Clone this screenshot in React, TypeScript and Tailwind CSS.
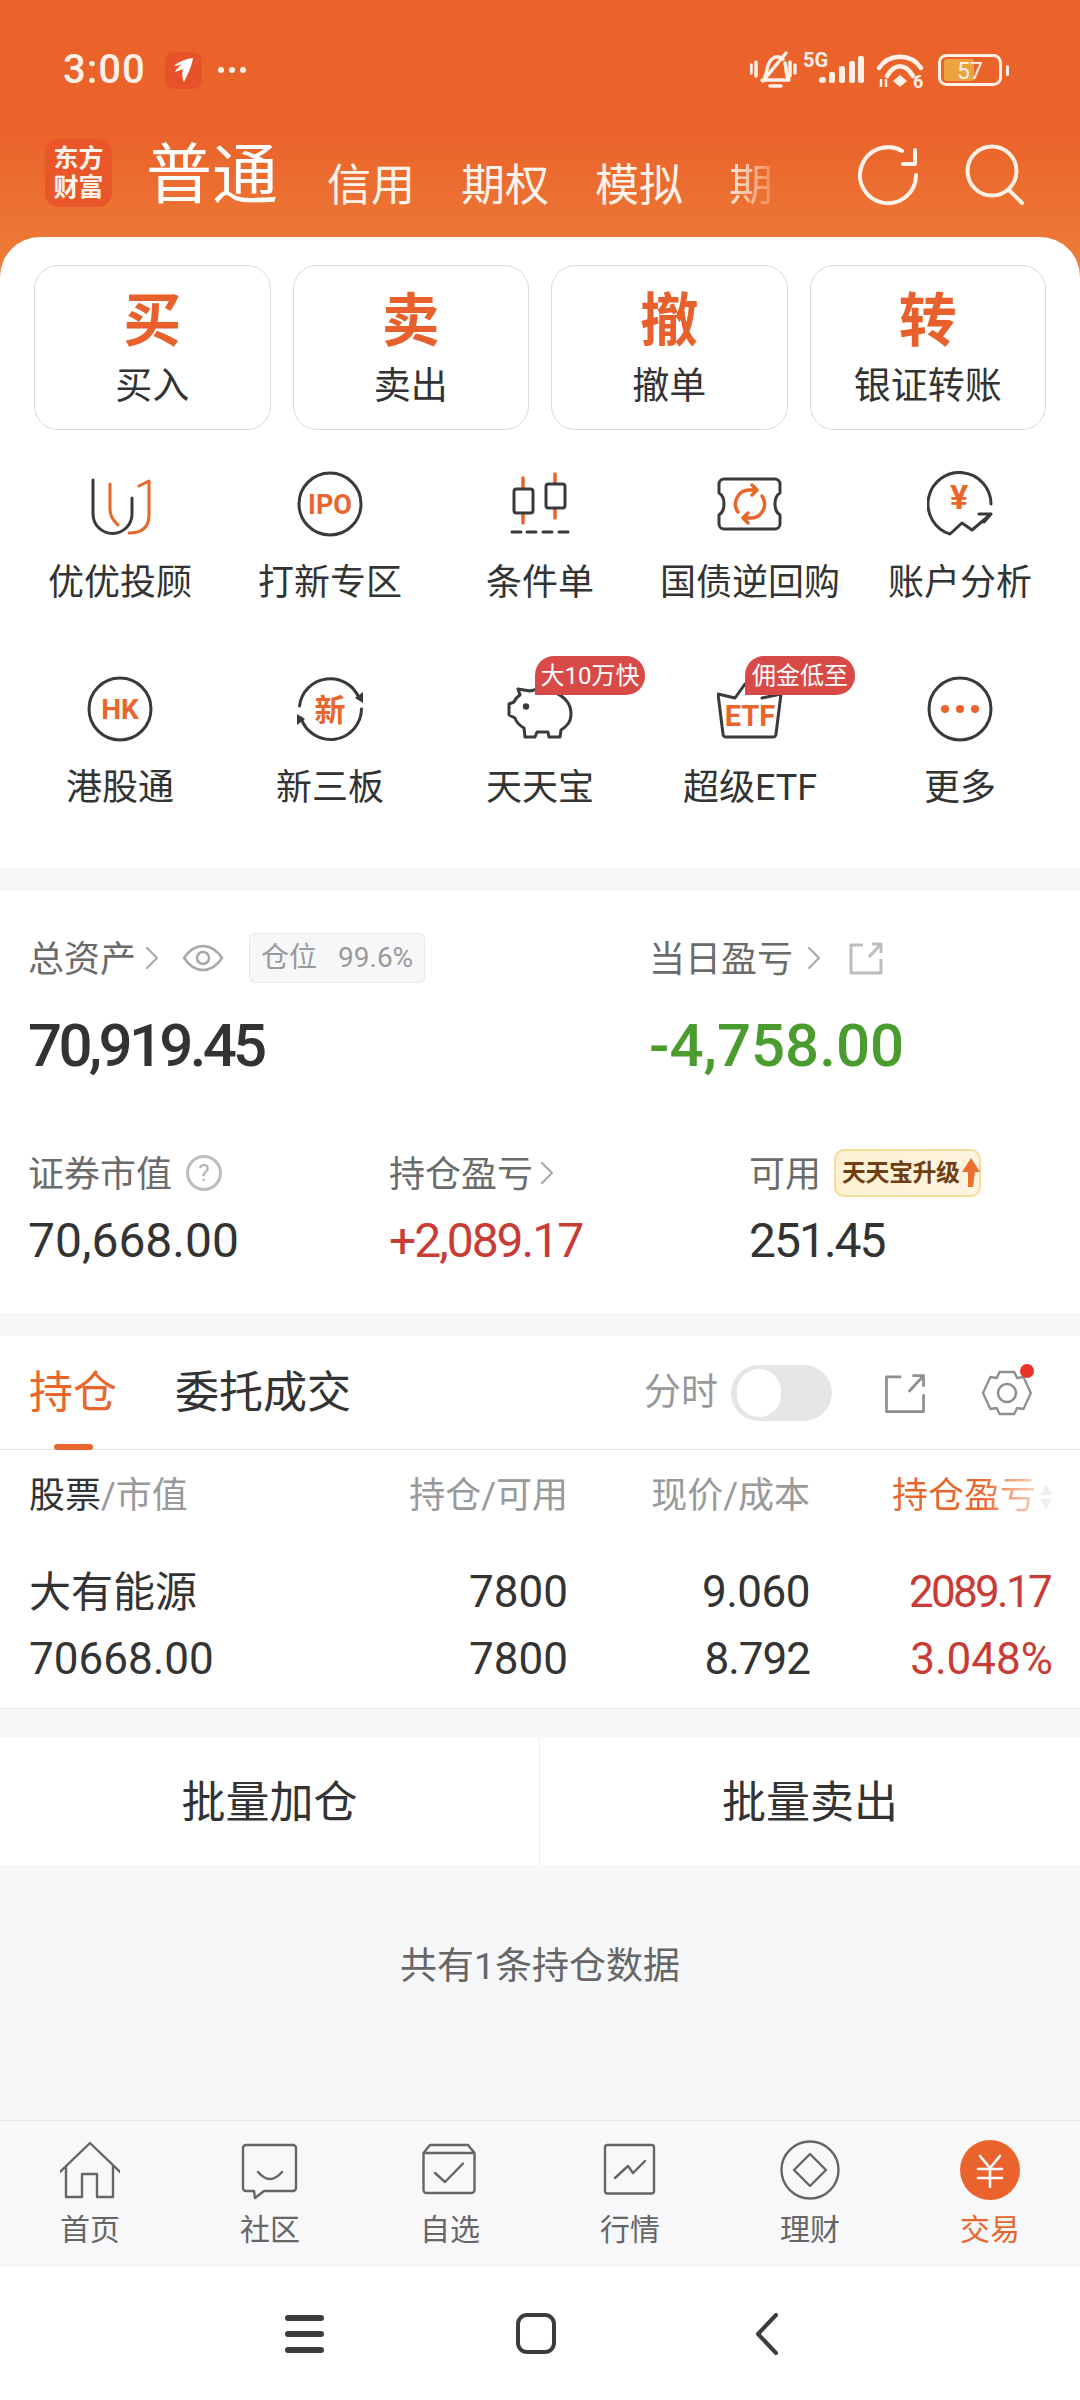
import React from "react";

const DK = "#3a3a3a";
const OR = "#e8652c";

function Svg({ children, w = 66, h = 66 }: { children: React.ReactNode; w?: number; h?: number }) {
  return (
    <svg width={w} height={h} viewBox={`0 0 ${w} ${h}`} fill="none" strokeLinecap="round" strokeLinejoin="round" className="block shrink-0">
      {children}
    </svg>
  );
}

function IconText({ x, y, size, children }: { x: number; y: number; size: number; children: string }) {
  return (
    <text x={x} y={y} fontSize={size} fontWeight={700} fill={OR} stroke="none" textAnchor="middle" fontFamily="Roboto, 'Noto Sans CJK SC', sans-serif">
      {children}
    </text>
  );
}

const icons: Record<string, React.ReactNode> = {
  uu: (
    <Svg>
      <path d="M6 9V43a19.5 19.5 0 0 0 39 0V27" stroke={DK} strokeWidth={3} />
      <path d="M23 13V38Q23 47 31 54M42 62Q62 62 62 44V10L52 15" stroke={OR} strokeWidth={3} />
    </Svg>
  ),
  ipo: (
    <Svg>
      <circle cx="33" cy="33" r="31" stroke={DK} strokeWidth={3} />
      <IconText x={33} y={43} size={27}>IPO</IconText>
    </Svg>
  ),
  candle: (
    <Svg>
      <path d="M16 7V52M48 3V47" stroke={OR} strokeWidth={3.5} />
      <rect x="7" y="18" width="19" height="24" rx="2.5" fill="#fff" stroke={DK} strokeWidth={3} />
      <rect x="39" y="13" width="19" height="24" rx="2.5" fill="#fff" stroke={DK} strokeWidth={3} />
      <path d="M5 61H14M20 61H29M36 61H45M52 61H61" stroke={DK} strokeWidth={3} />
    </Svg>
  ),
  ticket: (
    <Svg>
      <path d="M7 8H58a5 5 0 0 1 5 5V22q-5 3 -5 11t5 11V53a5 5 0 0 1 -5 5H7a5 5 0 0 1 -5 -5V44q5 -3 5 -11T2 22V13a5 5 0 0 1 5 -5Z" stroke={DK} strokeWidth={3} />
      <path d="M21 41A14 14 0 0 1 33 19H38M35 14L40 19L35 24" stroke={OR} strokeWidth={3.5} />
      <path d="M45 25A14 14 0 0 1 33 47H28M31 52L26 47L31 42" stroke={OR} strokeWidth={3.5} />
    </Svg>
  ),
  yen: (
    <Svg>
      <path d="M64 33A31.5 31.5 0 1 0 23 63L35 52L45 59L64 43M52 43H64L57 51" stroke={DK} strokeWidth={3} />
      <IconText x={32} y={38} size={34}>¥</IconText>
    </Svg>
  ),
  hk: (
    <Svg>
      <circle cx="33" cy="33" r="31" stroke={DK} strokeWidth={3} />
      <IconText x={33} y={43} size={28}>HK</IconText>
    </Svg>
  ),
  xin: (
    <Svg>
      <path d="M2.5 30A31 31 0 0 1 62 22M64.5 33A31 31 0 0 1 4 42" stroke={DK} strokeWidth={3} />
      <path d="M58 22L66 16V27ZM8 43L0 49V38Z" fill={DK} />
      <IconText x={33} y={45} size={31}>新</IconText>
    </Svg>
  ),
  pig: (
    <Svg>
      <path d="M11 13L23 15C38 10 64 18 64 38C64 46 60 50 54 54L53 61H42L41 56H30L28 61H18L17 52C12 49 9 46 8 42L2 39V28L7 26C8 23 10 21 13 19Z" stroke={DK} strokeWidth={3} />
      <circle cx="19" cy="30.5" r="3.2" fill={DK} />
    </Svg>
  ),
  etf: (
    <Svg>
      <path d="M1 18L18 22L28 8M45 22L64 18L59 58a3 3 0 0 1 -3 3H9a3 3 0 0 1 -3 -3L1 18" stroke={DK} strokeWidth={3} />
      <IconText x={33} y={50} size={29}>ETF</IconText>
    </Svg>
  ),
  more: (
    <Svg>
      <circle cx="33" cy="33" r="31" stroke={DK} strokeWidth={3} />
      <circle cx="18" cy="33" r="4" fill={OR} />
      <circle cx="33" cy="33" r="4" fill={OR} />
      <circle cx="48" cy="33" r="4" fill={OR} />
    </Svg>
  ),
};

const G = "#666666";
const navIcons: React.ReactNode[] = [
  <Svg w={60} h={60} key="a">
    <path d="M0 32L30 3L60 32M6 26V57H22V34H37V57H53V26" stroke={G} strokeWidth={2.4} />
  </Svg>,
  <Svg w={60} h={60} key="b">
    <path d="M6 5H53a3 3 0 0 1 3 3V48a3 3 0 0 1 -3 3H24L15 58L14 51H6a3 3 0 0 1 -3 -3V8a3 3 0 0 1 3 -3Z" stroke={G} strokeWidth={2.4} />
    <path d="M18 32Q30 46 42 32" stroke={G} strokeWidth={2.4} />
  </Svg>,
  <Svg w={60} h={60} key="c">
    <path d="M3.5 13L10 5H48L54.5 13V50a3 3 0 0 1 -3 3H6.5a3 3 0 0 1 -3 -3ZM3.5 13H54.5" stroke={G} strokeWidth={2.4} />
    <path d="M15 33L25 42L43 23.500" stroke={G} strokeWidth={2.4} />
  </Svg>,
  <Svg w={60} h={60} key="d">
    <rect x="5" y="5" width="49" height="48.500" rx="2.500" stroke={G} strokeWidth={2.4} />
    <path d="M15 38L28 26L33 33L45 21" stroke={G} strokeWidth={2.4} />
  </Svg>,
  <Svg w={60} h={60} key="e">
    <circle cx="30" cy="30" r="28.500" stroke={G} strokeWidth={2.4} />
    <path d="M30 14L46 30L30 46L14 30Z" stroke={G} strokeWidth={2.4} />
  </Svg>,
  <Svg w={60} h={60} key="f">
    <circle cx="30" cy="30" r="30" fill="#ea632c" />
    <path d="M20 16L30 28L40 16M18 29H42M18 38H42M30 28V47" stroke="#fff" strokeWidth={2.6} />
  </Svg>,
];

function Chevron() {
  return (
    <svg width="14" height="22" viewBox="0 0 14 22" fill="none" className="block shrink-0">
      <path d="M2 1L12 11L2 21" stroke="#ababab" strokeWidth={2.2} strokeLinecap="round" strokeLinejoin="round" />
    </svg>
  );
}

function Share({ s = 34, c = "#bdbdbd", w = 3 }: { s?: number; c?: string; w?: number }) {
  return (
    <svg width={s} height={s} viewBox="0 0 34 34" fill="none" className="block shrink-0">
      <path d="M14 4H2V32H32V18M20 16L32 3M23 3H32V12" stroke={c} strokeWidth={w} strokeLinejoin="round" />
    </svg>
  );
}

const actions = [
  ["买", "买入"],
  ["卖", "卖出"],
  ["撤", "撤单"],
  ["转", "银证转账"],
];
const row1 = [
  ["uu", "优优投顾"],
  ["ipo", "打新专区"],
  ["candle", "条件单"],
  ["ticket", "国债逆回购"],
  ["yen", "账户分析"],
];
const row2 = [
  ["hk", "港股通"],
  ["xin", "新三板"],
  ["pig", "天天宝", "大10万快"],
  ["etf", "超级ETF", "佣金低至"],
  ["more", "更多"],
];
const nav = ["首页", "社区", "自选", "行情", "理财", "交易"];

function Cell({ k, label, badge }: { k: string; label: string; badge?: string }) {
  return (
    <div className="relative flex flex-col items-center">
      {icons[k]}
      <div className="mt-[26px] whitespace-nowrap text-[36px] leading-[40px] text-[#333333]">{label}</div>
      {badge && (
        <div className="absolute left-[100px] top-[-20px] flex h-[39px] w-[110px] items-center justify-center whitespace-nowrap rounded-[19px] rounded-bl-none bg-[#d84a48] text-[24px] leading-[30px] text-white">
          {badge}
        </div>
      )}
    </div>
  );
}

export default function App() {
  return (
    <div className="flex h-[2400px] w-[1080px] flex-col overflow-hidden bg-[#f6f7f9] font-['Roboto','Noto_Sans_CJK_SC',sans-serif] text-[#333333]">
      {/* orange header */}
      <header className="h-[277px] shrink-0 bg-gradient-to-b from-[#ea622a] via-[#ea642b] to-[#ed7e38] pt-[50px]">
        <div className="flex h-[40px] items-center justify-between pl-[63px] pr-[70px] text-[#fff0e8]">
          <div className="flex items-center">
            <span className="w-[84px] text-[40px] font-medium leading-[40px] tracking-[1px]">3:00</span>
            <span className="ml-[18px] flex h-[37px] w-[37px] items-center justify-center rounded-[9px] bg-[#e7522a]">
              <svg width="24" height="26" viewBox="0 0 24 26" fill="#fff">
                <path d="M21 1C13 2 6 5 2 9C5 9 8 8 10 7C7 10 4 12 3 15C6 14 9 13 11 12C10 15 10 21 12 25C15 19 20 9 21 1Z" />
              </svg>
            </span>
            <span className="ml-[16px] flex gap-[5px]">
              <i className="block h-[6px] w-[6px] rounded-full bg-[#fff0e8]" />
              <i className="block h-[6px] w-[6px] rounded-full bg-[#fff0e8]" />
              <i className="block h-[6px] w-[6px] rounded-full bg-[#fff0e8]" />
            </span>
          </div>
          <svg width="260" height="60" viewBox="0 -10 260 60" fill="none" className="block">
            {/* bell */}
            <g stroke="#fff0e8" strokeWidth={3.5} strokeLinecap="round" strokeLinejoin="round">
              <path d="M15 26C18 22 16 14 22 9C25 6 30 6 33 9M35 13C37 19 35 24 39 30H12" />
              <path d="M13 31L36 3" />
              <path d="M1 15V23M6 12V26M40 12V26M45 15V23" />
              <path d="M20 36H31" />
            </g>
            {/* 5G & signal */}
            <text x="53" y="17" fontSize="20" fontWeight={700} fill="#fff0e8" fontFamily="Roboto, sans-serif">5G</text>
            <g fill="#fff0e8">
              <rect x="69" y="27" width="7" height="6" rx="3" />
              <rect x="79" y="22" width="6" height="11" rx="2" />
              <rect x="89" y="16" width="6" height="17" rx="2" />
              <rect x="99" y="11" width="6" height="22" rx="2" />
              <rect x="108" y="6" width="6" height="27" rx="2" />
            </g>
            {/* wifi */}
            <g stroke="#fff0e8" strokeWidth={4.5} strokeLinecap="round" fill="none">
              <path d="M129 18C139 3 161 3 171 18" />
              <path d="M137 26C145 13 155 13 163 26" />
            </g>
            <path d="M143 31L150 25L157 31L150 37Z" fill="#fff0e8" />
            <path d="M131 29V37M136 29V37" stroke="#fff0e8" strokeWidth={2.500} />
            <text x="163" y="38" fontSize="18" fontWeight={700} fill="#fff0e8" fontFamily="Roboto, sans-serif">6</text>
            {/* battery */}
            <rect x="189.500" y="5.500" width="61" height="29" rx="7" stroke="#fff0e8" strokeWidth={3} />
            <rect x="194" y="9" width="30" height="22" rx="3" fill="#eda23d" />
            <rect x="256" y="15" width="3" height="11" rx="1.500" fill="#fff0e8" />
            <text x="220" y="29" fontSize="23" textAnchor="middle" fill="#fff0e8" fontFamily="Roboto, sans-serif">57</text>
          </svg>
        </div>

        <div className="mt-[49px] flex h-[68px] items-end pl-[45px]">
          <div className="flex h-[68px] w-[67px] flex-col items-center justify-center rounded-[14px] bg-[#e9562a] text-[25px] font-bold leading-[29px] text-[#fff3ec]">
            <span>东方</span>
            <span>财富</span>
          </div>
          <span className="mb-[-3px] ml-[34px] text-[66px] leading-[68px] text-white">普通</span>
          <div className="mb-[-4px] ml-[49px] flex items-end gap-[46px] text-[#fff3ec]">
            <span className="text-[44px] leading-[50px]">信用</span>
            <span className="text-[44px] leading-[50px]">期权</span>
            <span className="text-[44px] leading-[50px]">模拟</span>
          </div>
          <span className="mb-[-4px] ml-[46px] w-[44px] bg-gradient-to-r from-[#ffe9dc] to-[#ee8a50] bg-clip-text text-[44px] leading-[50px] text-transparent">期</span>
          <svg width="62" height="62" viewBox="0 0 62 62" fill="none" className="mb-[1px] ml-[85px] block shrink-0">
            <path d="M58 31A28 28 0 1 1 44 7" stroke="#fff3ec" strokeWidth={4} strokeLinecap="round" />
            <path d="M57 6V20H45" stroke="#fff3ec" strokeWidth={4} strokeLinecap="round" strokeLinejoin="round" />
          </svg>
          <svg width="62" height="62" viewBox="0 0 62 62" fill="none" className="mb-[1px] ml-[43px] block shrink-0">
            <circle cx="29" cy="27" r="24.500" stroke="#fff0e4" strokeWidth={4} />
            <path d="M46 46L59 59" stroke="#fff0e4" strokeWidth={4} strokeLinecap="round" />
          </svg>
        </div>
      </header>

      {/* white rounded panel */}
      <section className="relative mt-[-40px] h-[631px] shrink-0 rounded-t-[40px] bg-white pt-[28px]">
        <div className="grid grid-cols-4 gap-[22px] px-[34px]">
          {actions.map(([big, small]) => (
            <div key={big} className="flex h-[165px] flex-col items-center rounded-[24px] border border-[#d9d9d9] pt-[19px]">
              <span className="text-[58px] font-bold leading-[72px] text-[#e8602c]">{big}</span>
              <span className="mt-[8px] text-[37px] leading-[44px] text-[#333333]">{small}</span>
            </div>
          ))}
        </div>
        <div className="mt-[41px] grid grid-cols-5 gap-y-[73px] px-[15px]">
          {row1.map(([k, l]) => (
            <Cell key={k} k={k} label={l} />
          ))}
          {row2.map(([k, l, b]) => (
            <Cell key={k} k={k} label={l} badge={b} />
          ))}
        </div>
      </section>

      {/* assets */}
      <section className="mt-[23px] h-[422px] shrink-0 bg-white pt-[42px] text-[#6b6b6b]">
        <div className="grid grid-cols-[621px_1fr] pl-[28px]">
          <div className="flex h-[50px] items-center">
            <span className="pt-[4px] text-[36px] leading-[44px]">总资产</span>
            <span className="ml-[9px]"><Chevron /></span>
            <svg width="42" height="28" viewBox="0 0 42 28" fill="none" className="ml-[23px] block">
              <path d="M2 14C8 5 14 2 21 2S34 5 40 14C34 23 28 26 21 26S8 23 2 14Z" stroke="#a8a8a8" strokeWidth={2.500} />
              <circle cx="21" cy="14" r="6" stroke="#a8a8a8" strokeWidth={2.500} />
            </svg>
            <div className="ml-[25px] flex h-[50px] w-[176px] items-center rounded-[6px] border border-[#e8e8e8] bg-[#f6f7f9] pl-[11px] text-[28px] leading-[36px] text-[#9a9a9a]">
              <span>仓位</span>
              <span className="ml-[21px]">99.6%</span>
            </div>
          </div>
          <div className="flex h-[50px] items-center">
            <span className="pt-[4px] text-[36px] leading-[44px]">当日盈亏</span>
            <span className="ml-[14px]"><Chevron /></span>
            <span className="ml-[28px]"><Share /></span>
          </div>
          <div className="mt-[28px] text-[60px] font-medium leading-[70px] tracking-[-3.7px] text-[#333333]">70,919.45</div>
          <div className="mt-[28px] text-[60px] font-medium leading-[70px] text-[#4b9c2e]">-4,758.00</div>
        </div>
        <div className="mt-[68px] grid grid-cols-[361px_360px_1fr] pl-[28px]">
          <div className="flex h-[48px] items-center">
            <span className="pt-[4px] text-[36px] leading-[44px]">证券市值</span>
            <span className="ml-[14px] flex h-[36px] w-[36px] items-center justify-center rounded-full border-[3px] border-[#bdbdbd] text-[24px] leading-[24px] text-[#b0b0b0]">?</span>
          </div>
          <div className="flex h-[48px] items-center">
            <span className="pt-[4px] text-[36px] leading-[44px]">持仓盈亏</span>
            <span className="ml-[7px]"><Chevron /></span>
          </div>
          <div className="flex h-[48px] items-center">
            <span className="pt-[4px] text-[36px] leading-[44px]">可用</span>
            <div className="ml-[13px] flex h-[48px] w-[147px] items-center rounded-[10px] border-[2px] border-[#f9dc9c] bg-gradient-to-r from-[#fdf0d2] to-[#fff4df] pl-[6px]">
              <span className="whitespace-nowrap text-[24px] font-bold leading-[30px] tracking-[-0.500px] text-[#6e3f14]">天天宝升级</span>
              <svg width="20" height="32" viewBox="0 0 20 32" className="ml-[1px] block shrink-0">
                <path d="M10 1L19 15H14L12 30H7L7 15H1Z" fill="#ed6f2e" />
              </svg>
            </div>
          </div>
          <div className="mt-[16px] text-[48px] leading-[56px] text-[#333333]">70,668.00</div>
          <div className="mt-[16px] text-[48px] leading-[56px] tracking-[-2px] text-[#c93b35]">+2,089.17</div>
          <div className="mt-[16px] text-[48px] leading-[56px] tracking-[-2px] text-[#333333]">251.45</div>
        </div>
      </section>

      {/* positions */}
      <section className="mt-[23px] shrink-0 bg-white">
        <div className="relative flex h-[114px] items-center border-b border-[#e6e6e6] pl-[29px]">
          <span className="text-[44px] leading-[50px] text-[#e8652c]">持仓</span>
          <span className="ml-[58px] text-[44px] leading-[50px] text-[#333333]">委托成交</span>
          <span className="ml-[293px] text-[37px] leading-[44px] text-[#999999]">分时</span>
          <div className="ml-[13px] flex h-[56px] w-[101px] items-center rounded-full bg-[#e6e6e6] pl-[6px]">
            <div className="h-[48px] w-[44px] rounded-full bg-white" />
          </div>
          <span className="ml-[52px]">
            <Share s={42} c="#8f8f8f" w={2.200} />
          </span>
          <svg width="52" height="48" viewBox="0 0 52 48" fill="none" className="ml-[55px] block shrink-0">
            <path d="M18 3H34L37 9L44 8L52 24L44 40L37 39L34 45H18L15 39L8 40L0 24L8 8L15 9Z" transform="translate(2 0) scale(.92 1)" stroke="#8f8f8f" strokeWidth={2.500} strokeLinejoin="round" />
            <circle cx="26" cy="24" r="9" stroke="#8f8f8f" strokeWidth={2.500} />
          </svg>
          <i className="absolute left-[1020px] top-[28px] block h-[14px] w-[14px] rounded-full bg-[#e8332a]" />
          <i className="absolute bottom-[-1px] left-[54px] block h-[6px] w-[39px] rounded-[3px] bg-[#e8652c]" />
        </div>
        <div className="grid grid-cols-[260px_279px_242px_240px] pl-[29px] pt-[24px] text-[#333333]">
          <div className="text-[36px] leading-[44px]">股票<span className="text-[#999999]">/市值</span></div>
          <div className="text-right text-[36px] leading-[44px] text-[#999999]">持仓/可用</div>
          <div className="text-right text-[36px] leading-[44px] text-[#999999]">现价/成本</div>
          <div className="mr-[-2px] flex justify-end">
            <span className="w-[148px] whitespace-nowrap bg-gradient-to-r from-[#e8652c] from-60% to-[#f8d8c8] bg-clip-text text-[36px] leading-[44px] text-transparent">持仓盈亏</span>
            <svg width="12" height="30" viewBox="0 0 12 30" className="mt-[8px] block shrink-0">
              <path d="M6 2L12 13H0ZM6 28L12 17H0Z" fill="#eeeeee" />
            </svg>
          </div>

          <div className="mt-[41px] text-[42px] leading-[67px]">大有能源</div>
          <div className="mt-[41px] text-right text-[44px] leading-[67px]">7800</div>
          <div className="mt-[41px] text-right text-[44px] leading-[67px] tracking-[-0.500px]">9.060</div>
          <div className="mt-[41px] text-right text-[44px] leading-[67px] tracking-[-2.700px] text-[#c93b35]">2089.17</div>

          <div className="text-[44px] leading-[67px]">70668.00</div>
          <div className="text-right text-[44px] leading-[67px]">7800</div>
          <div className="text-right text-[44px] leading-[67px] tracking-[-1px]">8.792</div>
          <div className="mr-[-3px] text-right text-[44px] leading-[67px] text-[#c93b35]">3.048%</div>
        </div>
        <div className="h-[16px] border-b border-[#e8e8e8]" />
      </section>

      {/* bulk buttons */}
      <section className="mt-[28px] grid h-[128px] shrink-0 grid-cols-2 bg-white text-[44px] leading-[52px] text-[#333333]">
        <div className="flex items-center justify-center border-r border-[#f0f0f0] pt-[4px]">批量加仓</div>
        <div className="flex items-center justify-center pt-[4px]">批量卖出</div>
      </section>

      <section className="flex-1 pt-[80px] text-center text-[37px] leading-[44px] text-[#666666]">共有1条持仓数据</section>

      {/* bottom nav */}
      <nav className="grid h-[147px] shrink-0 grid-cols-6 border-t border-[#e5e6e8] bg-[#f8f8fa] pt-[19px]">
        {nav.map((l, i) => (
          <div key={l} className="flex flex-col items-center">
            {navIcons[i]}
            <span className={`mt-[13px] text-[30px] leading-[34px] ${i === 5 ? "text-[#e8652c]" : "text-[#666666]"}`}>{l}</span>
          </div>
        ))}
      </nav>

      {/* system nav */}
      <div className="flex h-[133px] shrink-0 items-center bg-white pl-[285px]">
        <div className="flex w-[39px] flex-col gap-[10px]">
          <i className="block h-[6px] rounded-full bg-[#3c3c3c]" />
          <i className="block h-[6px] rounded-full bg-[#3c3c3c]" />
          <i className="block h-[6px] rounded-full bg-[#3c3c3c]" />
        </div>
        <div className="ml-[192px] h-[41px] w-[40px] rounded-[11px] border-[4px] border-[#3c3c3c]" />
        <svg width="24" height="42" viewBox="0 0 24 42" fill="none" className="ml-[199px] block shrink-0">
          <path d="M21 2L3 21L21 40" stroke="#3c3c3c" strokeWidth={4} strokeLinecap="round" strokeLinejoin="round" />
        </svg>
      </div>
    </div>
  );
}
